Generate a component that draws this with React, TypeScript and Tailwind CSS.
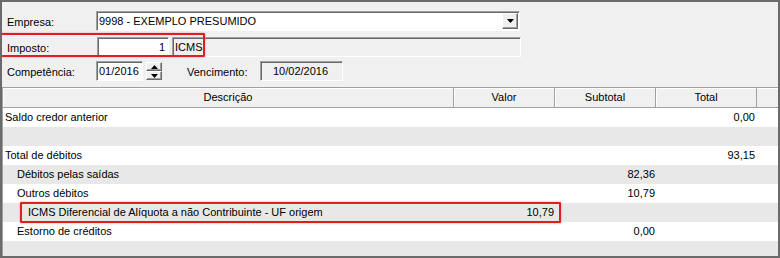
import React from 'react';

const rows = [
  { desc: 'Saldo credor anterior', indent: 0, valor: '', subtotal: '', total: '0,00' },
  { desc: '', indent: 0, valor: '', subtotal: '', total: '' },
  { desc: 'Total de débitos', indent: 0, valor: '', subtotal: '', total: '93,15' },
  { desc: 'Débitos pelas saídas', indent: 1, valor: '', subtotal: '82,36', total: '' },
  { desc: 'Outros débitos', indent: 1, valor: '', subtotal: '10,79', total: '' },
  { desc: 'ICMS Diferencial de Alíquota a não Contribuinte - UF origem', indent: 2, valor: '10,79', subtotal: '', total: '' },
  { desc: 'Estorno de créditos', indent: 1, valor: '', subtotal: '0,00', total: '' },
  { desc: '', indent: 0, valor: '', subtotal: '', total: '' },
];

const indentClass = ['pl-[2px]', 'pl-[14px]', 'pl-[25px]'];

const sunken =
  'border border-t-[#a0a0a0] border-l-[#a0a0a0] border-b-white border-r-white shadow-[inset_1px_1px_0_#696969]';
const raised =
  'bg-[#f0f0f0] border border-t-white border-l-white border-b-[#696969] border-r-[#696969] shadow-[inset_-1px_-1px_0_#a0a0a0]';

const Triangle: React.FC<{ up?: boolean }> = ({ up }) => (
  <svg width="7" height="4" viewBox="0 0 7 4">
    <path d={up ? 'M3.5 0L7 4H0z' : 'M0 0h7L3.5 4z'} fill="#000" />
  </svg>
);

const HeaderCell: React.FC<{ label?: string }> = ({ label }) => (
  <div className="flex items-center justify-center h-full border-r border-r-[#a0a0a0] shadow-[inset_1px_0_0_#fff]">
    {label}
  </div>
);

export default function App() {
  return (
    <div
      className="w-[780px] h-[258px] bg-[#f0f0f0] border-2 border-[#6b6b6b] flex flex-col text-[11px] text-black overflow-hidden relative"
      style={{ fontFamily: '"Liberation Sans", Arial, sans-serif' }}
    >
      {/* form */}
      <div className="flex flex-col pl-[5px] pt-[9px]">
        <div className="flex items-center h-[20px]">
          <span className="w-[89px] pt-[2px]">Empresa:</span>
          <div className={`w-[424px] h-[20px] bg-white ${sunken} flex items-center justify-between pl-[2px] pr-[1px]`}>
            <span>9998 - EXEMPLO PRESUMIDO</span>
            <div className={`w-[16px] h-[16px] ${raised} flex items-center justify-center`}>
              <Triangle />
            </div>
          </div>
        </div>
        <div className="flex items-center h-[20px] mt-[6px]">
          <span className="w-[90px] pt-[2px]">Imposto:</span>
          <div className={`w-[72px] h-[20px] bg-white ${sunken} flex items-center justify-end pr-[3px]`}>1</div>
          <div className={`ml-[3px] w-[349px] h-[20px] ${sunken} flex items-center pl-[2px]`}>ICMS</div>
        </div>
        <div className="flex items-center h-[20px] mt-[4px]">
          <span className="w-[89px] pt-[2px]">Competência:</span>
          <div className={`w-[47px] h-[20px] bg-white ${sunken} flex items-center pl-[2px]`}>01/2016</div>
          <div className="ml-[3px] w-[16px] h-[18px] flex flex-col">
            <div className={`flex-1 ${raised} flex items-center justify-center`}>
              <Triangle up />
            </div>
            <div className={`flex-1 ${raised} flex items-center justify-center`}>
              <Triangle />
            </div>
          </div>
          <span className="ml-[25px] w-[73px] pt-[2px]">Vencimento:</span>
          <div className={`w-[83px] h-[20px] ${sunken} flex items-center pl-[12px]`}>10/02/2016</div>
        </div>
      </div>

      {/* highlight of Imposto row */}
      <div className="absolute left-[-2px] top-[31px] w-[205px] h-[24px] border-2 border-[#e21d1d] rounded-[1px] shadow-[0_0_2px_#ff8080]" />

      {/* grid */}
      <div className="mt-[6px] flex-1 flex flex-col border-t border-l border-[#a0a0a0] relative">
        <div className="grid grid-cols-[451px_101px_101px_101px_1fr] h-[20px] bg-[#f0f0f0] border-b border-[#a0a0a0] shadow-[inset_0_1px_0_#fff]">
          <HeaderCell label="Descrição" />
          <HeaderCell label="Valor" />
          <HeaderCell label="Subtotal" />
          <HeaderCell label="Total" />
          <div />
        </div>
        {rows.map((r, i) => (
          <div
            key={i}
            className={`grid grid-cols-[451px_101px_101px_101px_1fr] h-[19px] shrink-0 items-center ${i % 2 === 0 ? 'bg-white' : 'bg-[#e8e8e8]'}`}
          >
            <div className={`${indentClass[r.indent]} whitespace-nowrap`}>{r.desc}</div>
            <div className="text-right pr-[1px]">{r.valor}</div>
            <div className="text-right pr-[1px]">{r.subtotal}</div>
            <div className="text-right pr-[2px]">{r.total}</div>
            <div />
          </div>
        ))}
        {/* highlight of ICMS row */}
        <div className="absolute left-[17px] top-[114px] w-[541px] h-[21px] border-2 border-[#e21d1d] rounded-[1px] shadow-[0_0_2px_#ff8080]" />
      </div>
    </div>
  );
}
